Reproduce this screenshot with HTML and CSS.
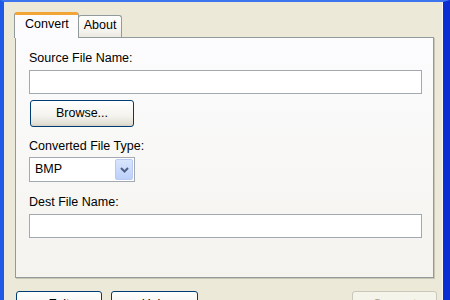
FILE: index.html
```html
<!DOCTYPE html>
<html>
<head>
<meta charset="utf-8">
<link rel="stylesheet" href="styles.css">
</head>
<body>
<div class="window">
  <div class="tabs">
    <div class="tab tab-active">Convert</div>
    <div class="tab">About</div>
  </div>
  <div class="panel">
    <div class="label">Source File Name:</div>
    <div class="textbox"></div>
    <button class="btn btn-browse">Browse...</button>
    <div class="label label-gap">Converted File Type:</div>
    <div class="select">
      <span class="select-value">BMP</span>
      <span class="select-arrow">
        <svg width="9" height="6" viewBox="0 0 9 6"><path d="M1 1 L4.5 4.5 L8 1" fill="none" stroke="#4D6185" stroke-width="2"/></svg>
      </span>
    </div>
    <div class="label label-gap2">Dest File Name:</div>
    <div class="textbox"></div>
  </div>
  <div class="footer">
    <button class="btn btn-foot btn-exit">Exit</button>
    <button class="btn btn-foot btn-help">Help</button>
    <button class="btn btn-foot btn-disabled">Convert</button>
  </div>
</div>
</body>
</html>
```
FILE: styles.css
```css
html, body {
  margin: 0;
  padding: 0;
}
body {
  width: 450px;
  height: 300px;
  overflow: hidden;
  font-family: "Liberation Sans", Arial, sans-serif;
  font-size: 12.5px;
  line-height: 15px;
  color: #000;
}
.window {
  box-sizing: border-box;
  width: 450px;
  height: 300px;
  overflow: hidden;
  background: #ECE9D8;
  border-left: 4px solid #1F5AE6;
  border-top: 2px solid #3E74EE;
  border-right: 7px solid #0A2ED2;
  box-shadow: inset -1px 0 0 #F7F6F0;
  display: flex;
  flex-direction: column;
}
.window > * {
  flex-shrink: 0;
}
.tabs {
  display: flex;
  align-items: flex-end;
  margin-left: 10px;
  margin-top: 10px;
  margin-bottom: -1px;
  height: 26px;
}
.tab {
  box-sizing: border-box;
  height: 23px;
  padding: 2px 5px 0 5px;
  border: 1px solid #919B9C;
  border-bottom: none;
  border-radius: 3px 3px 0 0;
  background: linear-gradient(#FFFFFF, #F3F2EC 70%, #E9E7DD);
}
.tab-active {
  position: relative;
  z-index: 1;
  height: 26px;
  padding: 2px 9px 0 10px;
  border-top: 3px solid #F2A536;
  background: #FCFCFE;
  margin-right: -1px;
}
.panel {
  box-sizing: border-box;
  margin-left: 11px;
  width: 419px;
  height: 241px;
  border: 1px solid #919B9C;
  box-shadow: 1px 1px 0 #C9C6B6;
  background: linear-gradient(#FCFCFE, #F4F3EE);
  padding: 13px 11px 0 13px;
  display: flex;
  flex-direction: column;
  align-items: flex-start;
}
.panel > * {
  flex-shrink: 0;
}
.label {
  height: 15px;
  margin-bottom: 4px;
}
.label-gap {
  margin-top: 12px;
  margin-bottom: 3px;
}
.label-gap2 {
  margin-top: 13px;
}
.textbox {
  box-sizing: border-box;
  width: 393px;
  height: 24px;
  background: #FFFFFF;
  border: 1px solid #A2A9B0;
}
.btn {
  box-sizing: border-box;
  font-family: "Liberation Sans", Arial, sans-serif;
  font-size: 12.5px;
  line-height: 15px;
  color: #000;
  border: 1px solid #003C74;
  border-radius: 3px;
  background: linear-gradient(#FFFFFF, #F4F3EE 60%, #E3E0D6 90%, #D6D0C5);
  padding: 0;
}
.btn-browse {
  margin-top: 6px;
  margin-left: 1px;
  width: 104px;
  height: 27px;
}
.select {
  box-sizing: border-box;
  width: 106px;
  height: 25px;
  background: #FFFFFF;
  border: 1px solid #A2A9B0;
  display: flex;
  align-items: center;
  justify-content: space-between;
  padding: 1px 1px 1px 5px;
}
.select-arrow {
  box-sizing: border-box;
  width: 18px;
  height: 21px;
  border: 1px solid #B9CBF3;
  border-radius: 2px;
  background: linear-gradient(#D9E5FD, #BCD0FA);
  display: flex;
  align-items: center;
  justify-content: center;
}
.select-arrow svg {
  display: block;
}
.footer {
  display: flex;
  margin-top: 13px;
  padding-left: 12px;
  padding-right: 6px;
  gap: 9px;
}
.btn-foot {
  height: 27px;
  padding-top: 5px;
  display: flex;
  justify-content: center;
  align-items: flex-start;
  flex-shrink: 0;
}
.btn-exit {
  width: 86px;
}
.btn-help {
  width: 87px;
}
.btn-disabled {
  width: 85px;
  margin-left: auto;
  border-color: #C9C7BA;
  background: #F5F4EA;
  color: #ACA899;
}
```
